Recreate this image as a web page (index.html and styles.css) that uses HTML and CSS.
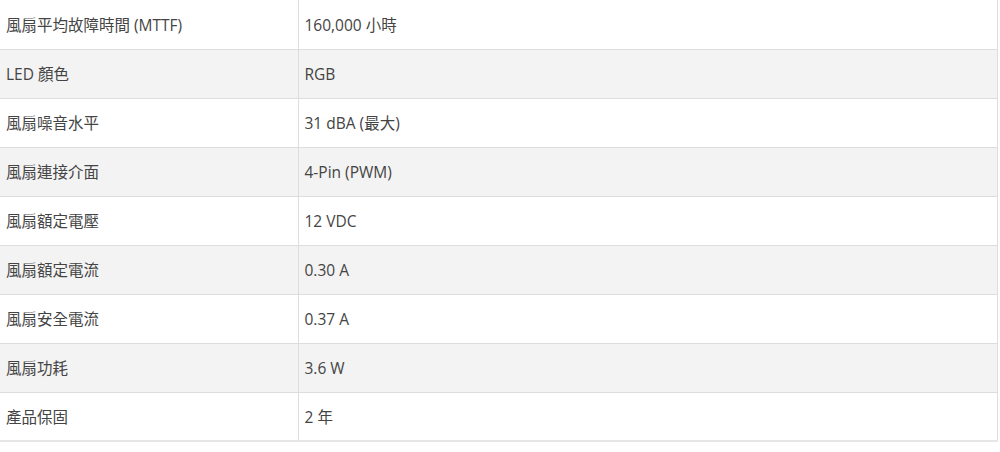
FILE: index.html
```html
<!DOCTYPE html>
<html lang="zh-Hant">
<head>
<meta charset="utf-8">
<link rel="stylesheet" href="styles.css">
</head>
<body>
<table class="spec">
<tbody>
<tr><td class="k">風扇平均故障時間 (MTTF)</td><td class="v">160,000 小時</td></tr>
<tr class="alt"><td class="k">LED 顏色</td><td class="v">RGB</td></tr>
<tr><td class="k">風扇噪音水平</td><td class="v">31 dBA (最大)</td></tr>
<tr class="alt"><td class="k">風扇連接介面</td><td class="v">4-Pin (PWM)</td></tr>
<tr><td class="k">風扇額定電壓</td><td class="v">12 VDC</td></tr>
<tr class="alt"><td class="k">風扇額定電流</td><td class="v">0.30 A</td></tr>
<tr><td class="k">風扇安全電流</td><td class="v">0.37 A</td></tr>
<tr class="alt"><td class="k">風扇功耗</td><td class="v">3.6 W</td></tr>
<tr><td class="k">產品保固</td><td class="v">2 年</td></tr>
</tbody>
</table>
</body>
</html>
```

FILE: styles.css
```css
html, body {
  margin: 0;
  padding: 0;
  background: #fff;
}
.spec {
  width: 998px;
  border-collapse: collapse;
  font-family: "Open Sans", "Noto Sans CJK TC", sans-serif;
  font-size: 15.5px;
  color: #444;
  border-right: 1px solid #ddd;
  border-bottom: 2px solid #e6e6e6;
}
.spec tr {
  height: 49px;
}
.spec td {
  border-bottom: 1px solid #ddd;
  vertical-align: middle;
  padding: 0 0 0 6px;
  box-sizing: border-box;
}
.spec tr:last-child td {
  border-bottom: 2px solid #e6e6e6;
}
.spec .k {
  width: 298px;
  border-right: 1px solid #ddd;
}
.spec .v {
  padding-left: 6px;
}
.spec tr.alt td {
  background: #f3f3f3;
}
```
